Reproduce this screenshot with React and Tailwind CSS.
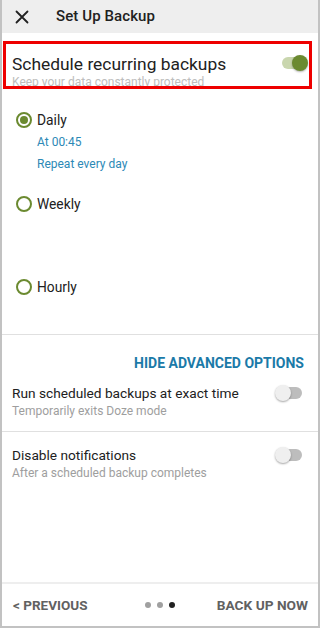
import React from "react";

function Toggle({ on }) {
  if (on) {
    return (
      <div className="relative w-[26px] h-[16px] flex items-center">
        <div className="w-[24px] h-[12px] rounded-full bg-[#c9d6ae]" />
        <div className="absolute right-0 top-0 w-[16px] h-[16px] rounded-full bg-[#6b8a30] shadow-[0_1px_2px_rgba(0,0,0,0.3)]" />
      </div>
    );
  }
  return (
    <div className="relative w-[27px] h-[16px] flex items-center justify-end">
      <div className="w-[24px] h-[12px] rounded-full bg-[#bdbdbd]" />
      <div className="absolute left-0 top-0 w-[16px] h-[16px] rounded-full bg-[#efefef] shadow-[0_1px_2px_rgba(0,0,0,0.35)]" />
    </div>
  );
}

function Radio({ checked }) {
  return (
    <div className="w-[16px] h-[16px] rounded-full border-2 border-[#6b8a30] flex items-center justify-center">
      {checked && <div className="w-[8px] h-[8px] rounded-full bg-[#6b8a30]" />}
    </div>
  );
}

export default function App() {
  return (
    <div
      className="w-[320px] h-[628px] bg-[#c2c2c2] px-[2px] pb-[2px] overflow-hidden"
      style={{ fontFamily: "Roboto, 'Noto Sans', sans-serif" }}
    >
      <div className="w-full h-full bg-white flex flex-col">
        {/* App bar */}
        <div className="h-[33px] bg-[#eeeeee] flex items-center shrink-0">
          <svg width="14" height="14" viewBox="0 0 14 14" className="ml-[13px]">
            <path d="M1.5 1.5 L12.5 12.5 M12.5 1.5 L1.5 12.5" stroke="#212121" strokeWidth="1.8" strokeLinecap="round" />
          </svg>
          <span className="ml-[27px] text-[15px] font-medium text-[#212121] tracking-[0.1px]">Set Up Backup</span>
        </div>

        {/* Schedule header */}
        <div className="relative mt-[8px] h-[48px] shrink-0 overflow-hidden">
          <div className="flex items-center justify-between pl-[10px] pr-[10px] pt-[12px]">
            <span className="text-[17.4px] leading-[22px] text-[#212121]">Schedule recurring backups</span>
            <div className="mt-[-3px]">
              <Toggle on />
            </div>
          </div>
          <div className="pl-[10px] mt-[0px] text-[12px] leading-[14px] text-[#bdbdbd] whitespace-nowrap">Keep your data constantly protected</div>
          <div className="absolute left-[1px] top-0 w-[309px] h-[48px] border-[3px] border-[#ee0000] pointer-events-none" />
        </div>

        {/* Radio options */}
        <div className="flex flex-col pl-[14px] pt-[22px]">
          <div className="flex items-center gap-[5px] h-[18px]">
            <Radio checked />
            <span className="text-[13.8px] text-[#212121]">Daily</span>
          </div>
          <div className="pl-[21px] mt-[4px] text-[12px] leading-[18px] text-[#2c89b6]">At 00:45</div>
          <div className="pl-[21px] mt-[4px] text-[12px] leading-[18px] text-[#2c89b6]">Repeat every day</div>
          <div className="flex items-center gap-[5px] h-[18px] mt-[22px]">
            <Radio />
            <span className="text-[13.8px] text-[#212121]">Weekly</span>
          </div>
          <div className="flex items-center gap-[5px] h-[18px] mt-[65px]">
            <Radio />
            <span className="text-[13.8px] text-[#212121]">Hourly</span>
          </div>
        </div>

        <div className="mt-[38px] h-px bg-[#e0e0e0] shrink-0" />

        <div className="flex justify-end pr-[14px] pt-[19px]">
          <span className="text-[14px] leading-[18px] font-bold text-[#1b7aa8]">HIDE ADVANCED OPTIONS</span>
        </div>

        <div className="flex items-center justify-between pl-[10px] pr-[16px] mt-[12px]">
          <span className="text-[13.7px] leading-[18px] text-[#212121]">Run scheduled backups at exact time</span>
          <Toggle />
        </div>
        <div className="pl-[10px] text-[12px] leading-[16px] text-[#9e9e9e] mt-[1px]">Temporarily exits Doze mode</div>

        <div className="mt-[12px] h-px bg-[#e0e0e0] shrink-0" />

        <div className="flex items-center justify-between pl-[10px] pr-[16px] mt-[14px]">
          <span className="text-[13.7px] leading-[18px] text-[#212121]">Disable notifications</span>
          <Toggle />
        </div>
        <div className="pl-[10px] text-[12px] leading-[16px] text-[#9e9e9e] mt-[1px]">After a scheduled backup completes</div>

        <div className="flex-1" />

        {/* Footer */}
        <div className="h-[2px] bg-[#eeeeee] shrink-0" />
        <div className="h-[42px] grid grid-cols-3 items-center pl-[11px] pr-[10px] shrink-0">
          <span className="text-[13.5px] font-bold text-[#616161] whitespace-nowrap">&lt; PREVIOUS</span>
          <div className="flex items-center justify-center gap-[6px]">
            <div className="w-[6px] h-[6px] rounded-full bg-[#a0a0a0]" />
            <div className="w-[6px] h-[6px] rounded-full bg-[#a0a0a0]" />
            <div className="w-[6px] h-[6px] rounded-full bg-[#212121]" />
          </div>
          <span className="text-right text-[13.7px] font-bold text-[#616161] whitespace-nowrap">BACK UP NOW</span>
        </div>
      </div>
    </div>
  );
}
